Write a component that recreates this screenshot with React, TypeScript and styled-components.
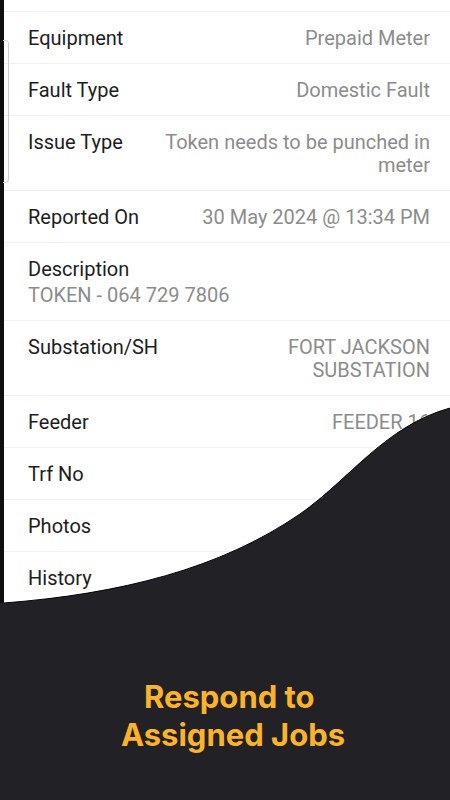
import { FC } from "react";
import styled, { createGlobalStyle } from "styled-components";

const GlobalStyle = createGlobalStyle`
  body {
    margin: 0;
    background: #222126;
  }
`;

const Page = styled.div`
  width: 450px;
  height: 800px;
  display: flex;
  flex-direction: column;
  background: #222126;
  overflow: hidden;
`;

const Device = styled.div`
  height: 604px;
  display: flex;
  position: relative;
  flex-shrink: 0;
`;

const Bezel = styled.div`
  width: 4px;
  background: #0e0e0f;
`;

const SideButton = styled.div`
  position: absolute;
  left: 3px;
  top: 40px;
  width: 5px;
  height: 141px;
  border: 1px solid #cfcfcf;
  border-left: none;
  border-radius: 0 4px 4px 0;
`;

const Screen = styled.div`
  flex: 1;
  background: #ffffff;
  padding-top: 11px;
  overflow: hidden;
  font-family: Roboto, "Noto Sans", sans-serif;
  font-size: 20px;
  line-height: 23px;
`;

const List = styled.div`
  display: flex;
  flex-direction: column;
  border-top: 1px solid #f1f1f1;
`;

const Row = styled.div<{ $stacked?: boolean }>`
  display: flex;
  flex-direction: ${(p) => (p.$stacked ? "column" : "row")};
  justify-content: space-between;
  align-items: flex-start;
  gap: ${(p) => (p.$stacked ? "3px" : "16px")};
  padding: 15px 20px 13px 24px;
  border-bottom: 1px solid #f1f1f1;
`;

const Label = styled.div`
  color: #1d1d1f;
  white-space: nowrap;
`;

const Value = styled.div<{ $left?: boolean }>`
  color: #8c8c8c;
  text-align: ${(p) => (p.$left ? "left" : "right")};
`;

const Wave = styled.svg`
  position: absolute;
  left: 0;
  bottom: 0;
  width: 450px;
  height: 210px;
`;

const Caption = styled.div`
  flex: 1;
  display: flex;
  justify-content: center;
  padding: 74px 0 0 16px;
`;

const Headline = styled.h1`
  margin: 0;
  font-family: Inter, "Noto Sans", sans-serif;
  font-weight: 700;
  font-size: 31px;
  line-height: 38px;
  color: #fbb32b;
  text-align: center;
`;

type Detail = { label: string; value: string[]; stacked?: boolean };

const details: Detail[] = [
  { label: "Equipment", value: ["Prepaid Meter"] },
  { label: "Fault Type", value: ["Domestic Fault"] },
  { label: "Issue Type", value: ["Token needs to be punched in", "meter"] },
  { label: "Reported On", value: ["30 May 2024 @ 13:34 PM"] },
  { label: "Description", value: ["TOKEN - 064 729 7806"], stacked: true },
  { label: "Substation/SH", value: ["FORT JACKSON", "SUBSTATION"] },
  { label: "Feeder", value: ["FEEDER 16"] },
  { label: "Trf No", value: [""] },
  { label: "Photos", value: [""] },
  { label: "History", value: [""] },
];

const curve = "M4 209 C120 200 220 175 300 120 C350 85 385 32 450 14";

const App: FC = () => {
  return (
    <Page>
      <GlobalStyle />
      <Device>
        <Bezel />
        <Screen>
          <List>
            {details.map((d) => (
              <Row key={d.label} $stacked={d.stacked}>
                <Label>{d.label}</Label>
                <Value $left={d.stacked}>
                  {d.value.map((line, i) => (
                    <div key={i}>{line}</div>
                  ))}
                </Value>
              </Row>
            ))}
          </List>
        </Screen>
        <SideButton />
        <Wave viewBox="0 0 450 210" preserveAspectRatio="none">
          <path d={`M0 210 L0 209 L${curve.slice(1)} L450 210 Z`} fill="#222126" />
          <path d={curve} fill="none" stroke="#050505" strokeWidth="1" />
        </Wave>
      </Device>
      <Caption>
        <Headline>
          Respond to{"\u00a0"}
          <br />
          Assigned Jobs
        </Headline>
      </Caption>
    </Page>
  );
};

export default App;
